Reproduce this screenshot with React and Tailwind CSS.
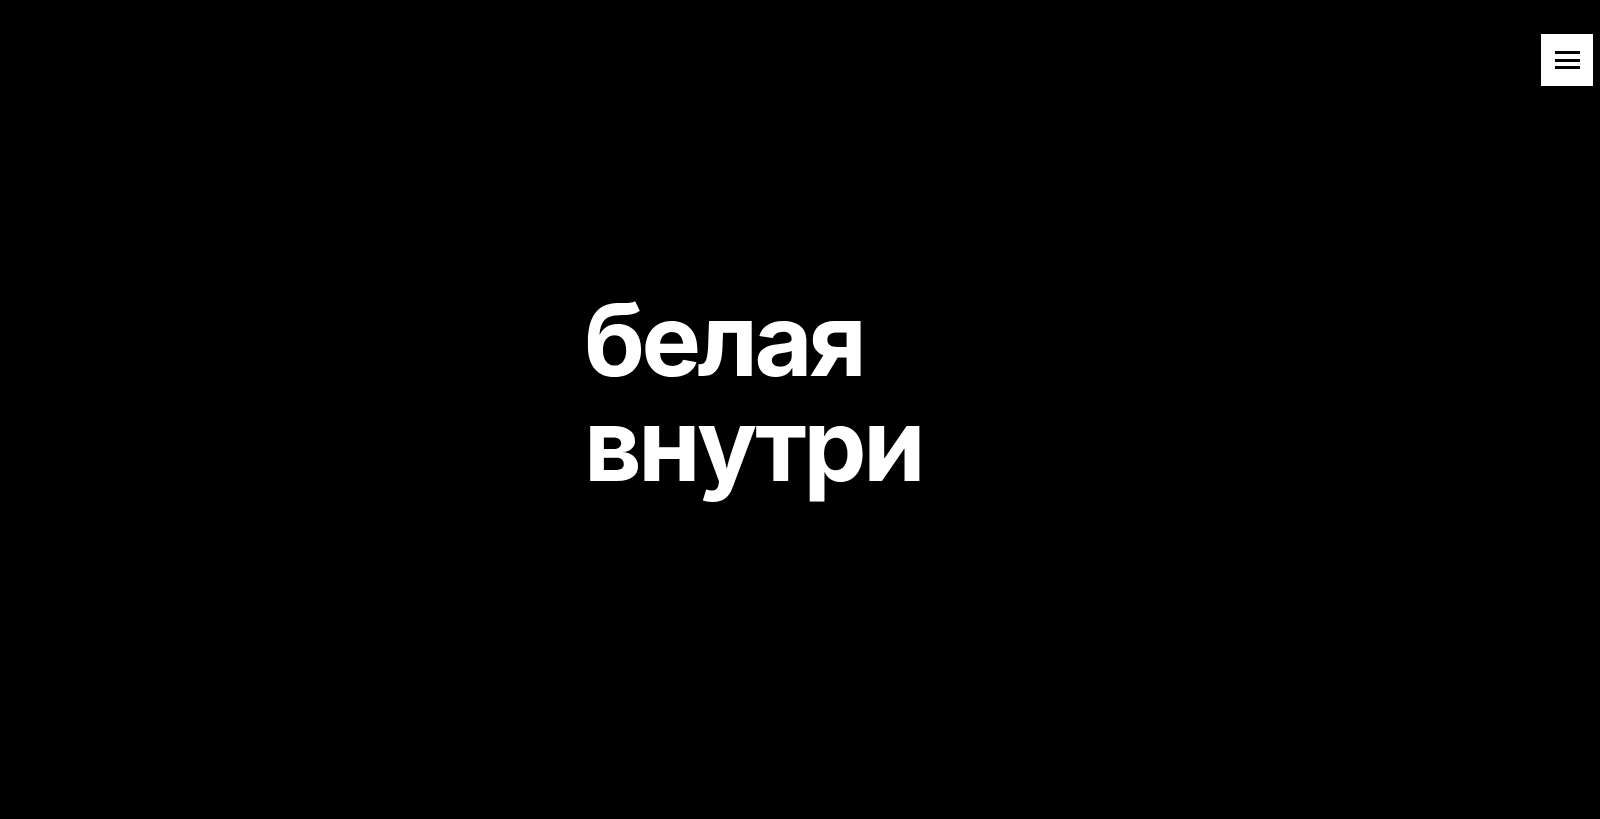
export default function App() {
  return (
    <div className="relative h-[819px] w-full overflow-hidden bg-black" style={{ fontFamily: 'Inter, "Noto Sans", sans-serif' }}>
      <button className="absolute right-[7px] top-[34px] flex h-[52px] w-[52px] flex-col items-center justify-center gap-[4.5px] bg-white">
        <span className="block h-[3px] w-[25px] bg-black"></span>
        <span className="block h-[3px] w-[25px] bg-black"></span>
        <span className="block h-[3px] w-[25px] bg-black"></span>
      </button>
      <div className="pl-[584px] pt-[287px]">
        <h1 className="text-[100px] font-bold leading-[105px] tracking-[-3.5px] text-white">
          <span className="block">белая</span>
          <span className="block">внутри</span>
        </h1>
      </div>
    </div>
  );
}
